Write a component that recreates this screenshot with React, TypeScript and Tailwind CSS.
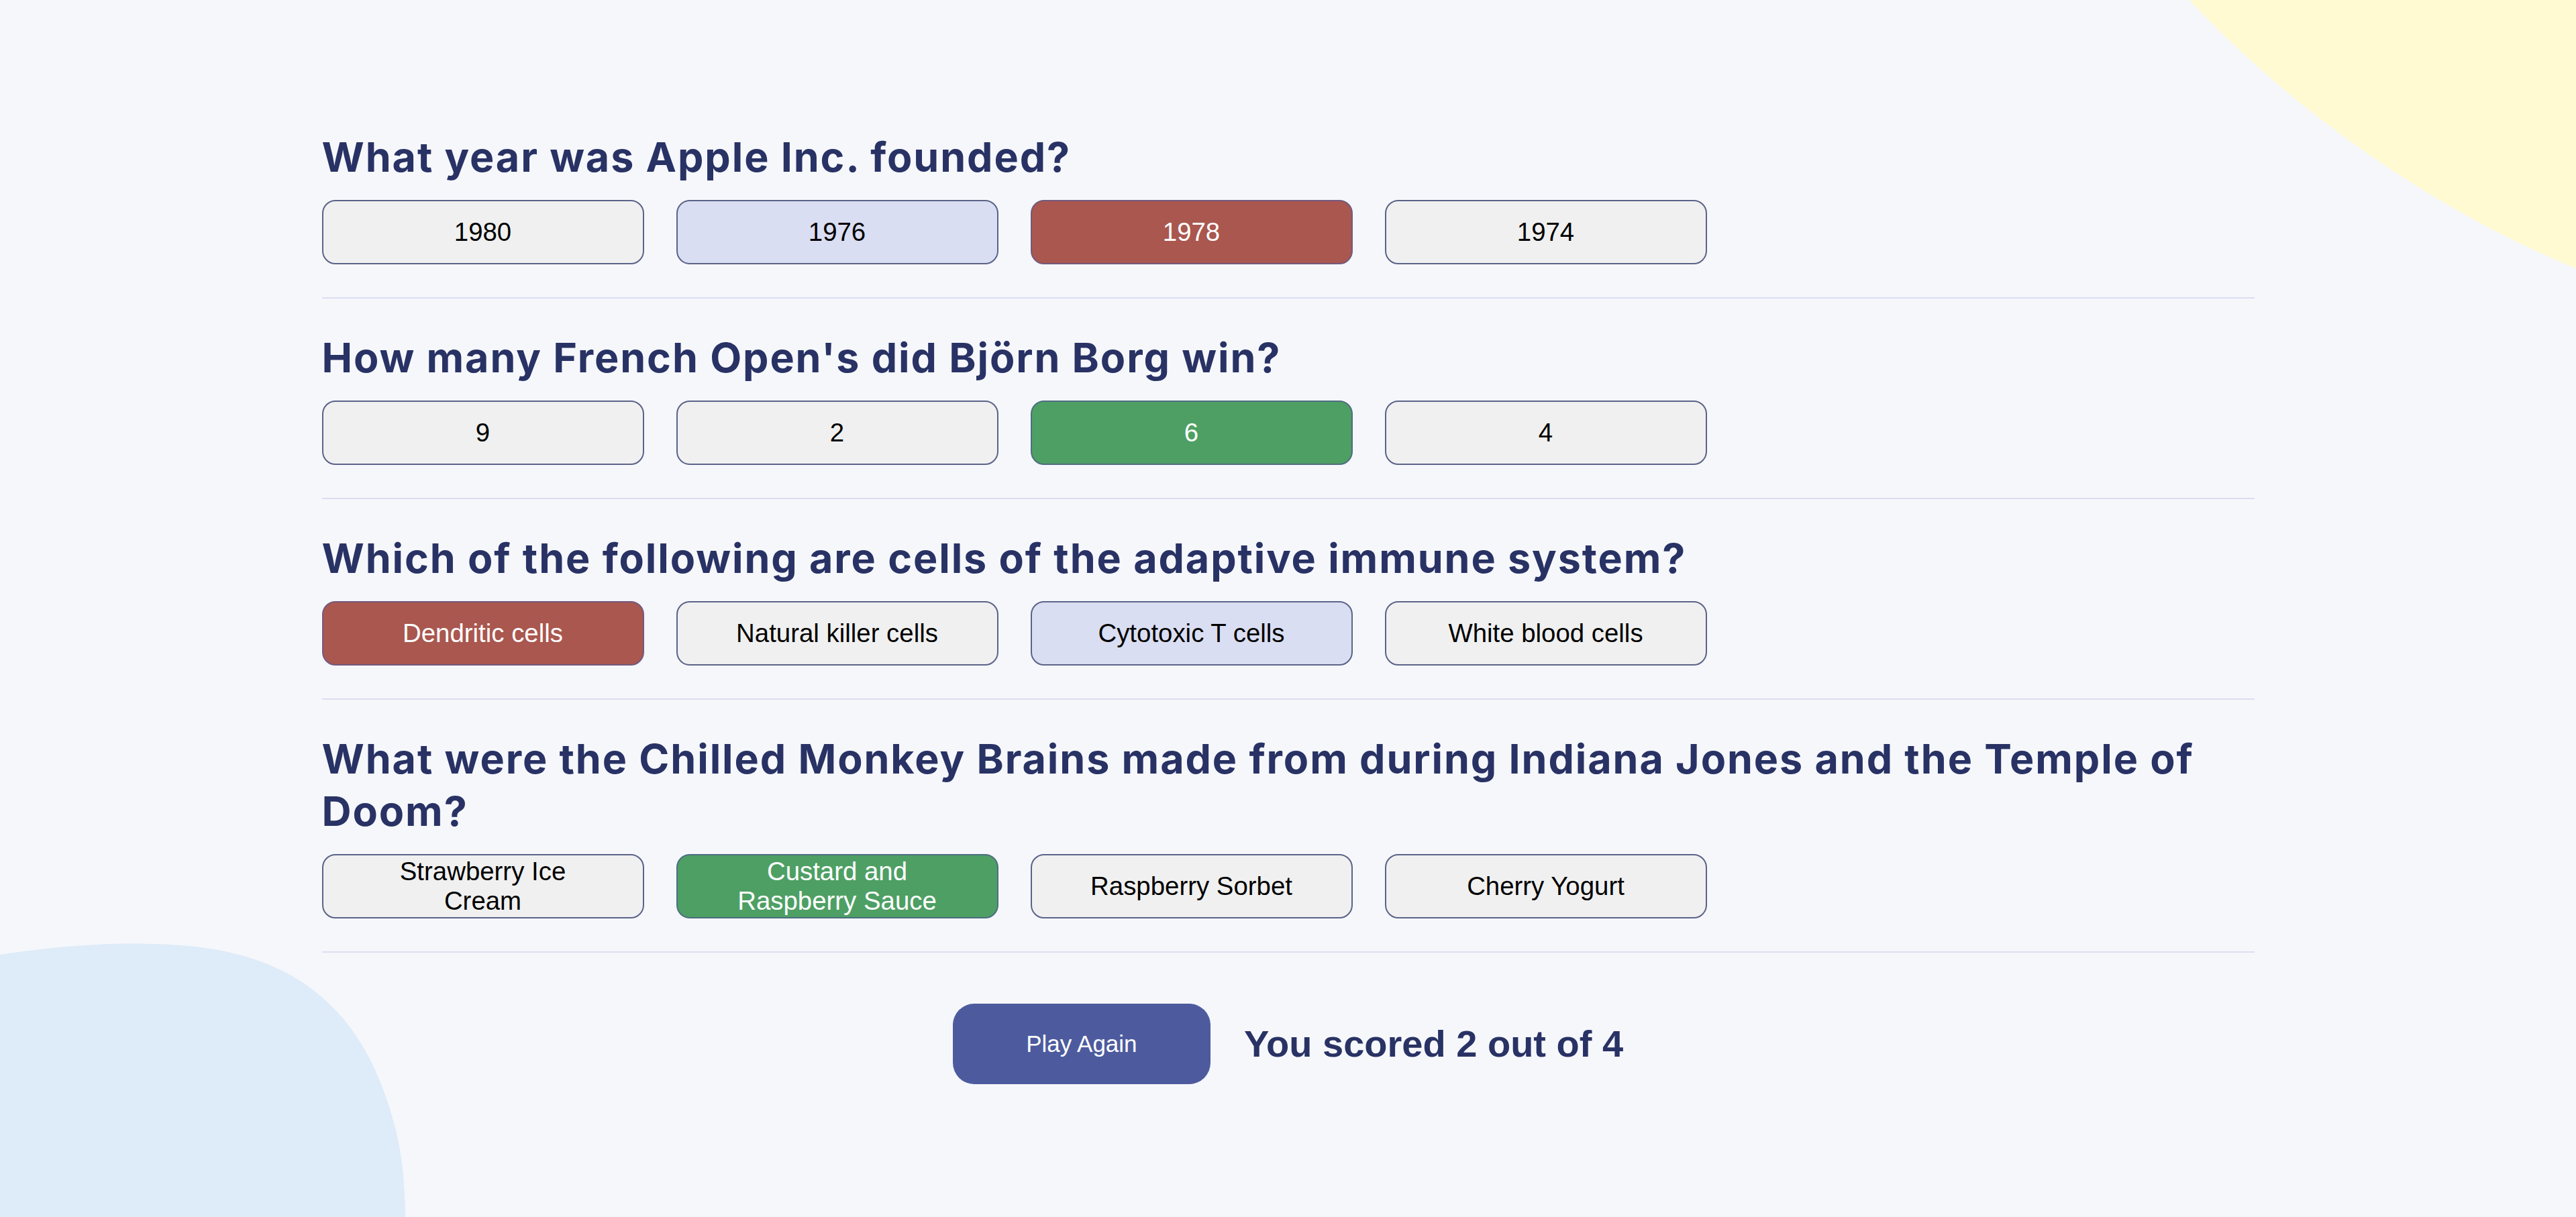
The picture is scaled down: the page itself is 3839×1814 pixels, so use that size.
type Status = 'idle' | 'picked' | 'right' | 'wrong';

interface Question {
  text: string;
  answers: { label: string; status: Status }[];
}

const questions: Question[] = [
  {
    text: 'What year was Apple Inc. founded?',
    answers: [
      { label: '1980', status: 'idle' },
      { label: '1976', status: 'picked' },
      { label: '1978', status: 'wrong' },
      { label: '1974', status: 'idle' },
    ],
  },
  {
    text: "How many French Open's did Björn Borg win?",
    answers: [
      { label: '9', status: 'idle' },
      { label: '2', status: 'idle' },
      { label: '6', status: 'right' },
      { label: '4', status: 'idle' },
    ],
  },
  {
    text: 'Which of the following are cells of the adaptive immune system?',
    answers: [
      { label: 'Dendritic cells', status: 'wrong' },
      { label: 'Natural killer cells', status: 'idle' },
      { label: 'Cytotoxic T cells', status: 'picked' },
      { label: 'White blood cells', status: 'idle' },
    ],
  },
  {
    text: 'What were the Chilled Monkey Brains made from during Indiana Jones and the Temple of Doom?',
    answers: [
      { label: 'Strawberry Ice Cream', status: 'idle' },
      { label: 'Custard and Raspberry Sauce', status: 'right' },
      { label: 'Raspberry Sorbet', status: 'idle' },
      { label: 'Cherry Yogurt', status: 'idle' },
    ],
  },
];

const statusClass: Record<Status, string> = {
  idle: 'bg-[#f0f0f0] border-[#5b6388] text-black',
  picked: 'bg-[#dadef2] border-[#5b6388] text-black',
  wrong: 'bg-[#a9574f] border-[#74597e] text-white',
  right: 'bg-[#4e9f64] border-[#4d6e80] text-white',
};

function Answer({ label, status }: { label: string; status: Status }) {
  return (
    <button
      className={`w-[480px] h-[96px] shrink-0 rounded-[20px] border-2 px-[60px] text-[38.4px] leading-[1.15] font-['Liberation_Sans',Arial,sans-serif] ${statusClass[status]}`}
    >
      {label}
    </button>
  );
}

export default function App() {
  return (
    <div className="relative min-h-[1814px] overflow-hidden bg-[#f5f7fb]">
      <svg
        className="absolute top-0 right-0 w-[576px] h-[410px]"
        viewBox="0 0 576 410"
        preserveAspectRatio="none"
      >
        <path d="M0 0 C120 130 330 300 576 400 L576 0 Z" fill="#fffad1" />
      </svg>
      <svg
        className="absolute bottom-0 left-0 w-[604px] h-[409px]"
        viewBox="0 0 604 409"
        preserveAspectRatio="none"
      >
        <path
          d="M0 18 C80 6 160 0 224 2 C420 4 540 80 590 280 C602 330 603 370 604 409 L0 409 Z"
          fill="#deebf8"
        />
      </svg>

      <main className="relative mx-auto w-[2880px] pt-[146px]">
        {questions.map((q) => (
          <section key={q.text} className="pt-[49px] pb-[49px] border-b-2 border-[#dbdef0]">
            <h2 className="text-[61px] leading-[78px] font-bold tracking-[1.9px] text-[#293264] font-['Inter',sans-serif]">
              {q.text}
            </h2>
            <div className="mt-[25px] flex gap-[48px]">
              {q.answers.map((a) => (
                <Answer key={a.label} label={a.label} status={a.status} />
              ))}
            </div>
          </section>
        ))}

        <div className="mt-[76px] flex items-center justify-center gap-[50px]">
          <button className="w-[384px] h-[120px] rounded-[32px] bg-[#4d5b9e] text-white text-[35px] font-['Liberation_Sans',Arial,sans-serif]">
            Play Again
          </button>
          <p className="text-[56px] font-bold text-[#293264] font-['Liberation_Sans',Arial,sans-serif]">
            You scored 2 out of 4
          </p>
        </div>
      </main>
    </div>
  );
}
